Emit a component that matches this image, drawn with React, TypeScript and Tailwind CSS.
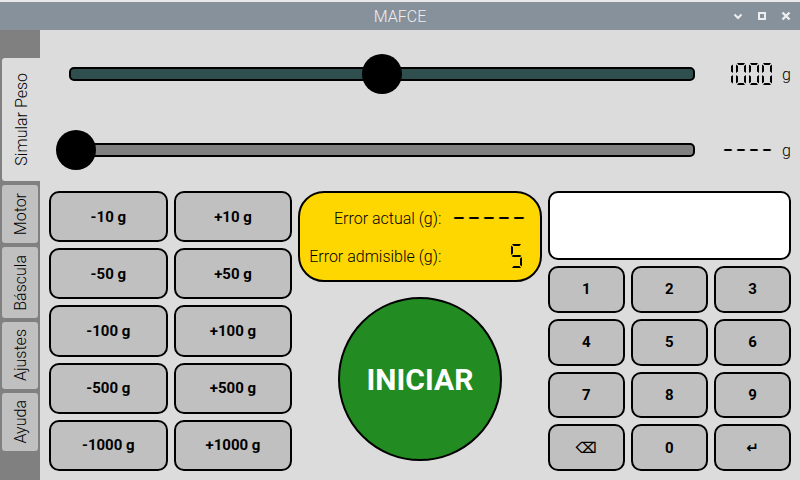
import React, { useState } from "react";

const TABS = [
  { name: "Simular Peso", height: "h-[123px]" },
  { name: "Motor", height: "h-[58px]" },
  { name: "Báscula", height: "h-[71px]" },
  { name: "Ajustes", height: "h-[67px]" },
  { name: "Ayuda", height: "h-[58px]" },
];

const STEPS = ["-10 g", "+10 g", "-50 g", "+50 g", "-100 g", "+100 g", "-500 g", "+500 g", "-1000 g", "+1000 g"];

const KEYS = ["1", "2", "3", "4", "5", "6", "7", "8", "9", "⌫", "0", "↵"];

const SEGMENTS: Record<string, string> = {
  "0": "abcdef",
  "1": "bc",
  "5": "acdfg",
  "-": "g",
};

function segmentPoints(segment: string, w: number, h: number): string {
  const m = h / 2;
  switch (segment) {
    case "a":
      return `1,0 ${w - 1},0 ${w - 2.5},2 2.5,2`;
    case "b":
      return `${w},1.5 ${w},${m - 1} ${w - 2},${m - 2.5} ${w - 2},3`;
    case "c":
      return `${w},${m + 1} ${w},${h - 1.5} ${w - 2},${h - 3} ${w - 2},${m + 2.5}`;
    case "d":
      return `1,${h} ${w - 1},${h} ${w - 2.5},${h - 2} 2.5,${h - 2}`;
    case "e":
      return `0,${m + 1} 0,${h - 1.5} 2,${h - 3} 2,${m + 2.5}`;
    case "f":
      return `0,1.5 0,${m - 1} 2,${m - 2.5} 2,3`;
    default:
      return `0.5,${m} 2,${m - 1} ${w - 2},${m - 1} ${w - 0.5},${m} ${w - 2},${m + 1} 2,${m + 1}`;
  }
}

type LcdProps = { value: string; digitWidth: number; digitHeight: number; pitch: number };

function Lcd({ value, digitWidth, digitHeight, pitch }: LcdProps) {
  const width = pitch * (value.length - 1) + digitWidth;
  return (
    <svg role="img" aria-label={value} width={width} height={digitHeight} viewBox={`0 0 ${width} ${digitHeight}`}>
      {value.split("").map((char, i) => (
        <g key={i} transform={`translate(${i * pitch} 0)`}>
          {(SEGMENTS[char] ?? "").split("").map((s) => (
            <polygon key={s} points={segmentPoints(s, digitWidth, digitHeight)} />
          ))}
        </g>
      ))}
    </svg>
  );
}

type SliderRowProps = { label: string; trackClass: string; initial: number; display: string };

function SliderRow({ label, trackClass, initial, display }: SliderRowProps) {
  const [value, setValue] = useState(initial);
  return (
    <div className="flex items-center">
      <div className="grid flex-1 items-center">
        <div className={`col-start-1 row-start-1 mx-[13px] h-3.5 rounded-[5px] border-2 border-black ${trackClass}`} />
        <input
          type="range"
          aria-label={label}
          min={0}
          max={2000}
          value={value}
          onChange={(e) => setValue(Number(e.target.value))}
          className="col-start-1 row-start-1 h-10 w-full appearance-none bg-transparent [&::-webkit-slider-thumb]:size-10 [&::-webkit-slider-thumb]:appearance-none [&::-webkit-slider-thumb]:rounded-full [&::-webkit-slider-thumb]:bg-black"
        />
      </div>
      <div className="flex w-16 justify-end">
        <Lcd value={display} digitWidth={10} digitHeight={22} pitch={13} />
      </div>
      <span className="w-[19px] pt-0.5 text-right">g</span>
    </div>
  );
}

const buttonClass = "rounded-[10px] border-2 border-black bg-[#c0c0c0] text-[15px] leading-5 font-bold";

export default function App() {
  const [active, setActive] = useState("Simular Peso");
  const [entry, setEntry] = useState("");

  const press = (key: string) => {
    if (key === "⌫") setEntry((v) => v.slice(0, -1));
    else if (key === "↵") setEntry("");
    else setEntry((v) => v + key);
  };

  return (
    <div className="flex min-h-screen flex-col bg-[#dcdcdc] font-[Roboto,'DejaVu_Sans',sans-serif] text-base font-light text-black">
      <header className="grid h-[30px] grid-cols-3 items-center border-t-2 border-[#e8e8e8] bg-[#87919b] text-[#eeeeee]">
        <h1 className="col-start-2 pt-0.5 text-center">MAFCE</h1>
        <div className="flex justify-end gap-2 pr-1.5">
          <button aria-label="Minimizar" className="size-4">
            <svg viewBox="0 0 16 16" className="size-4" fill="none" stroke="currentColor" strokeWidth="2">
              <path d="M4.5 6.5 8 10l3.5-3.5" />
            </svg>
          </button>
          <button aria-label="Maximizar" className="size-4">
            <svg viewBox="0 0 16 16" className="size-4" fill="none" stroke="currentColor" strokeWidth="2">
              <rect x="5" y="5" width="6" height="6" />
            </svg>
          </button>
          <button aria-label="Cerrar" className="size-4">
            <svg viewBox="0 0 16 16" className="size-4" fill="none" stroke="currentColor" strokeWidth="2.4">
              <path d="m4.5 4.5 7 7m0-7-7 7" />
            </svg>
          </button>
        </div>
      </header>

      <div className="flex flex-1">
        <nav role="tablist" aria-orientation="vertical" className="flex w-10 flex-col gap-1 bg-[#808080] pt-7 pl-0.5">
          {TABS.map((tab) => (
            <button
              key={tab.name}
              role="tab"
              aria-selected={active === tab.name}
              onClick={() => setActive(tab.name)}
              className={`flex items-center justify-center ${tab.height} ${
                active === tab.name ? "w-full rounded-l-[3px] bg-[#dcdcdc] pl-0.5" : "w-9 rounded-[3px] bg-[#c0c0c0] pl-0.5"
              }`}
            >
              <span className="rotate-180 leading-5 [writing-mode:vertical-rl]">{tab.name}</span>
            </button>
          ))}
        </nav>

        <main className="flex flex-1 flex-col px-[9px] pt-6 pb-[9px]">
          <div className="flex flex-col gap-9 pl-[7px]">
            <SliderRow label="Peso objetivo" trackClass="bg-[#2f4f4f]" initial={1000} display="1000" />
            <SliderRow label="Peso medido" trackClass="bg-[#808080]" initial={0} display="----" />
          </div>

          <div className="mt-[21px] grid flex-1 grid-cols-3 gap-1.5">
            <div className="grid auto-rows-fr grid-cols-2 gap-1.5">
              {STEPS.map((step) => (
                <button key={step} className={buttonClass}>
                  {step}
                </button>
              ))}
            </div>

            <div className="flex flex-col gap-1">
              <dl className="flex h-[91px] flex-col justify-center gap-3.5 rounded-[26px] border-2 border-black bg-[#ffd700] pr-[15px] pl-[7px]">
                <div className="flex h-6 items-center justify-between">
                  <dt className="w-[134px] pt-0.5 text-right whitespace-nowrap">Error actual (g):</dt>
                  <dd className="flex">
                    <Lcd value="-----" digitWidth={12} digitHeight={24} pitch={15} />
                  </dd>
                </div>
                <div className="flex h-6 items-center justify-between">
                  <dt className="w-[134px] pt-0.5 text-right whitespace-nowrap">Error admisible (g):</dt>
                  <dd className="flex pr-[3px]">
                    <Lcd value="5" digitWidth={11} digitHeight={24} pitch={15} />
                  </dd>
                </div>
              </dl>
              <div className="flex flex-1 items-center justify-center">
                <button className="size-[164px] rounded-full border-2 border-black bg-[#228b22] pt-0.5 text-[30px] leading-9 font-bold text-white">
                  INICIAR
                </button>
              </div>
            </div>

            <div className="flex flex-col gap-1.5">
              <input
                type="text"
                aria-label="Valor"
                value={entry}
                onChange={(e) => setEntry(e.target.value)}
                className="h-[69px] w-full rounded-[10px] border-2 border-black bg-white px-3 text-right text-3xl"
              />
              <div className="grid flex-1 auto-rows-fr grid-cols-3 gap-1.5">
                {KEYS.map((key) => (
                  <button key={key} onClick={() => press(key)} className={buttonClass}>
                    {key}
                  </button>
                ))}
              </div>
            </div>
          </div>
        </main>
      </div>
    </div>
  );
}
